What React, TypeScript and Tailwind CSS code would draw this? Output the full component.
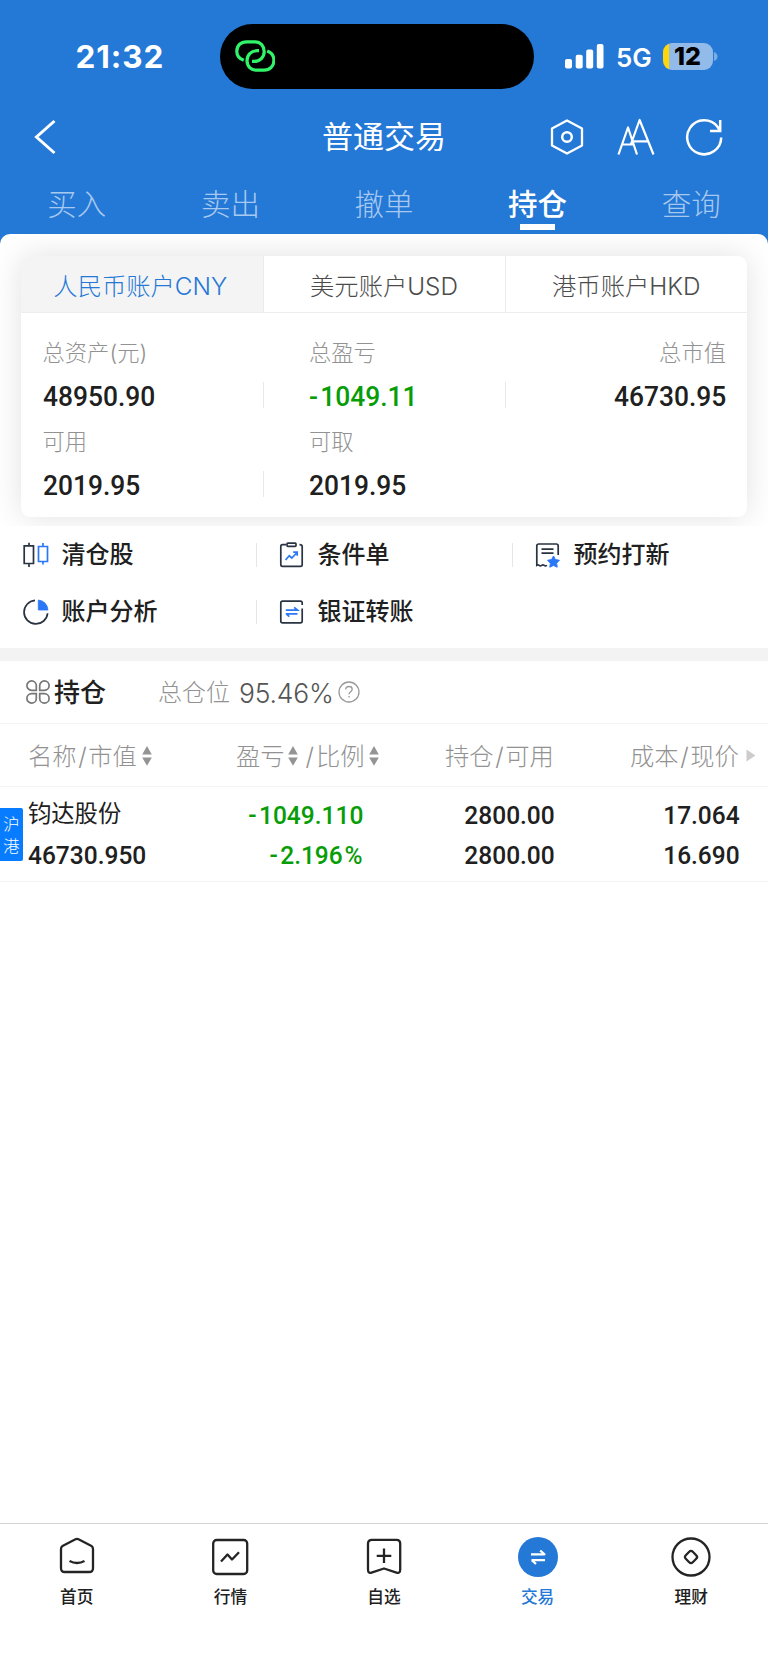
import React from 'react';

const CJK = "font-['Inter','Noto_Sans_CJK_SC',sans-serif]";

function Num({ children, className = 'origin-left' }: { children: string; className?: string }) {
  const negative = children.startsWith('-');
  const percent = children.endsWith('%');
  const body = children.replace('-', '').replace('%', '');
  return (
    <span className={`inline-block scale-x-[0.925] whitespace-nowrap font-['Roboto',sans-serif] font-medium ${className}`}>
      {negative && <span className="mr-[2.5px]">-</span>}
      {body}
      {percent && <span className="ml-[2px]">%</span>}
    </span>
  );
}

function StatusBar() {
  return (
    <div className="flex h-[113px] items-start pt-6">
      <div className="mt-[13px] w-[220px] pl-[75.5px] text-[31.5px] leading-[40px] font-bold tracking-[0.9px] text-white">
        <span className="inline-block whitespace-nowrap">21:32</span>
      </div>
      <div className="flex h-[64.5px] w-[314px] items-center rounded-full bg-black pl-[15px]">
        <svg width="40" height="32" viewBox="0 0 40 32" fill="none" stroke="#30f569" strokeWidth="3.2">
          <path d="M8.8 20.3C4.2 18.7 1.8 15.5 1.8 11.5C1.8 5.2 6 1.8 11.5 1.8H20C25.6 1.8 29.2 6.2 29.2 11.6C29.2 17.5 24.7 21.4 19 21.4H17" />
          <path d="M24 10.7H22C16 10.7 12 15 12 20.6C12 26.5 16 30.2 21.5 30.2H29C35 30.2 38.9 26 38.9 20.5C38.9 15.5 36.4 12.5 32.2 11" />
        </svg>
      </div>
      <div className="flex h-[64.5px] items-center pl-[31px]">
        <svg width="39" height="25" viewBox="0 0 39 25" fill="#fff">
          <rect x="0" y="15" width="7" height="9.5" rx="2" />
          <rect x="10.7" y="10.8" width="7" height="13.7" rx="2" />
          <rect x="21.2" y="5.6" width="7" height="18.9" rx="2" />
          <rect x="31.8" y="0" width="6.7" height="24.5" rx="2" />
        </svg>
        <span className="mt-[3px] ml-3 w-[36px] text-[26px] leading-8 font-semibold whitespace-nowrap text-white">5G</span>
        <div className="ml-[10.5px] flex h-[27px] w-[50px] items-center justify-center rounded-[9px] bg-[#92bbea] bg-linear-to-r from-[#ffd60a] from-12% to-[#92bbea] to-12%">
          <span className="text-[25px] leading-[27px] font-extrabold whitespace-nowrap text-black">12</span>
        </div>
        <svg className="ml-px" width="4" height="9" viewBox="0 0 4 9"><path d="M0 0Q3.5 1.5 3.5 4.5T0 9Z" fill="#7baee6" /></svg>
      </div>
    </div>
  );
}

function NavBar() {
  return (
    <div className="grid h-[48px] grid-cols-[1fr_auto_1fr] items-center">
      <svg className="ml-[34px]" width="23" height="36" viewBox="0 0 23 36" fill="none" stroke="#fff" strokeWidth="3">
        <path d="M20.5 2L2.5 18L20.5 34" />
      </svg>
      <h1 className="text-[31px] leading-10 font-normal text-white">普通交易</h1>
      <div className="flex items-center justify-end pr-[45px]">
        <svg width="34" height="38" viewBox="0 0 34 38" fill="none" stroke="#fff" strokeWidth="2.3" strokeLinejoin="round">
          <path d="M17 2.5L32 10.5V27.5L17 35.5L2 27.5V10.5Z" />
          <circle cx="17" cy="19" r="4.8" strokeWidth="2.5" />
        </svg>
        <svg className="ml-[33px]" width="38" height="38" viewBox="0 0 38 38" fill="none" stroke="#fff" strokeWidth="2.2" strokeLinejoin="round">
          <path d="M1.5 36.5L11 9.5L20 36.5M4.8 26.5H16.5M14 26L22.6 2L36.5 36.5M16.5 23.3H31" />
        </svg>
        <svg className="ml-[30px]" width="38" height="38" viewBox="0 0 38 38" fill="none" stroke="#fff" strokeWidth="2.5">
          <path d="M36.2 19.5A17 17 0 1 1 32.5 8.7L35 12.5M35.2 2V13H25" />
        </svg>
      </div>
    </div>
  );
}

const tabs = ['买入', '卖出', '撤单', '持仓', '查询'];

function TradeTabs() {
  return (
    <nav className="grid grow grid-cols-5 pt-[23px] text-[29.5px] leading-10">
      {tabs.map((t) => {
        const on = t === '持仓';
        return (
          <div key={t} className="flex flex-col items-center">
            <span className={on ? 'font-medium text-white' : 'font-light text-[#a8c9ef]'}>{t}</span>
            <span className={on ? 'h-[6px] w-[35px] bg-white' : 'h-[6px] w-[35px]'} />
          </div>
        );
      })}
    </nav>
  );
}

function Stat({ label, value, green, right, divider }: { label: string; value: string; green?: boolean; right?: boolean; divider?: boolean }) {
  return (
    <div className={`relative flex h-[89px] flex-col ${right ? 'items-end' : 'items-start'}`}>
      <span className="text-[22.3px] leading-[37px] font-light text-[#929292]">{label}</span>
      <span className={green ? 'text-[28.5px] leading-[49px] text-[#079d07]' : 'text-[28.5px] leading-[49px] text-[#202020]'}>
        <Num className={right ? 'origin-right' : 'origin-left'}>{value}</Num>
      </span>
      {divider && <span className="absolute top-[48px] right-0 h-[26px] w-px bg-[#e8e8e8]" />}
    </div>
  );
}

function AccountCard() {
  return (
    <section className="h-[292px] shrink-0 overflow-hidden rounded-t-[10px] bg-white px-[21px] pt-[22px]">
      <div className="h-[261px] overflow-clip rounded-[9px] bg-white shadow-[0_0_32px_rgba(0,0,0,0.12)]">
        <div className="grid h-[57px] grid-cols-[242.5px_242px_1fr] border-b border-[#ededed] text-center text-[24.3px] leading-[60px] font-light text-[#4c4c4c]">
          <div className="h-[56px] border-r border-[#ececec] bg-[#f4f4f4] pr-[3px] text-[#2478d6]">人民币账户CNY</div>
          <div className="h-[56px] border-r border-[#ececec]">美元账户USD</div>
          <div className="h-[56px]">港币账户HKD</div>
        </div>
        <div className="grid grid-cols-[221.5px_45px_197px_1fr] pt-[21px] pr-[21px] pl-[21.5px]">
          <Stat label="总资产(元)" value="48950.90" divider />
          <span />
          <Stat label="总盈亏" value="-1049.11" green divider />
          <Stat label="总市值" value="46730.95" right />
          <Stat label="可用" value="2019.95" divider />
          <span />
          <Stat label="可取" value="2019.95" />
        </div>
      </div>
    </section>
  );
}

const DARK = '#293342';
const BLUE = '#2a78f8';

const CandleIcon = () => (
  <svg width="26" height="26" viewBox="0 0 26 26" fill="none" strokeWidth="1.7">
    <path d="M1.2 3.8H10.5V21.5H1.2ZM6 .8V3.8M6 21.5V25" stroke={DARK} />
    <path d="M15.5 4.5H24.5V19.5H15.5ZM20 1V4.5M20 19.5V22.5" stroke={BLUE} />
  </svg>
);
const ClipIcon = () => (
  <svg width="26" height="26" viewBox="0 0 26 26" fill="none" strokeWidth="1.7" stroke={DARK}>
    <path d="M7 2.7H3.5Q1.8 2.7 1.8 4.5V22.5Q1.8 24.3 3.5 24.3H21.5Q23.2 24.3 23.2 22.5V4.5Q23.2 2.7 20.5 2.7" />
    <rect x="8" y="1.2" width="9" height="3.2" rx=".8" />
    <path d="M6.5 18L10.3 13.8L12.8 16L18 10.5M14.2 10.2H18.2V13.7" stroke={BLUE} />
  </svg>
);
const ListIcon = () => (
  <svg width="26" height="26" viewBox="0 0 26 26" fill="none" strokeWidth="1.7" stroke={DARK}>
    <path d="M23.2 13V4Q23.2 2 21.2 2H3.8Q1.8 2 1.8 4V23.2Q3 22.4 4.2 23.4T6.7 23.4T9.2 23.4T12 23.4M6.5 7.2H18.5M6.5 11.2H18.5" />
    <path d="M18.5 14L20.4 17.6L24.4 18.3L21.6 21.2L22.2 25.2L18.5 23.4L14.8 25.2L15.4 21.2L12.6 18.3L16.6 17.6Z" fill={BLUE} stroke={BLUE} strokeWidth="1" />
  </svg>
);
const PieIcon = () => (
  <svg width="26" height="26" viewBox="0 0 26 26" fill="none" strokeWidth="1.7" stroke={DARK}>
    <path d="M12 1.4A11.8 11.8 0 1 0 24.6 14.2" />
    <path d="M15.3 11V1Q24 2.2 25 11Z" fill={BLUE} stroke={BLUE} strokeWidth=".8" />
  </svg>
);
const TransferIcon = () => (
  <svg width="26" height="26" viewBox="0 0 26 26" fill="none" strokeWidth="1.7" stroke={DARK}>
    <path d="M23.2 6V4Q23.2 2.2 21.4 2.2H3.6Q1.8 2.2 1.8 4V22Q1.8 23.8 3.6 23.8H21.4Q23.2 23.8 23.2 22V9.5" />
    <path d="M6.8 11.2H18.5L15.2 8.4M18.5 14.8H6.8M7.3 14.8L10.3 17.6" stroke={BLUE} strokeWidth="1.8" />
  </svg>
);

const shortcuts = [
  { icon: <CandleIcon />, text: '清仓股', divider: true },
  { icon: <ClipIcon />, text: '条件单', divider: true },
  { icon: <ListIcon />, text: '预约打新', divider: false },
  { icon: <PieIcon />, text: '账户分析', divider: true },
  { icon: <TransferIcon />, text: '银证转账', divider: false },
];

function Shortcuts() {
  return (
    <section className="grid h-[122px] shrink-0 grid-cols-3 grid-rows-[57px_58px]">
      {shortcuts.map((s) => (
        <div key={s.text} className="flex items-center pl-[23px]">
          {s.icon}
          <span className="ml-[12.5px] grow text-[24px] leading-8 font-medium text-[#202020]">{s.text}</span>
          {s.divider && <span className="-mr-px h-6 w-px bg-[#e6e6e6]" />}
        </div>
      ))}
    </section>
  );
}

const Sort = ({ className = '' }: { className?: string }) => (
  <svg className={className} width="10" height="20" viewBox="0 0 10 20" fill="#949494">
    <path d="M5 0L9.8 8.4H.2ZM5 19.8L.2 11.4H9.8Z" />
  </svg>
);

const Slash = () => <span className="mx-[1.6px]">/</span>;

function Holdings() {
  return (
    <section className="shrink-0">
      <div className="flex h-[63px] items-center border-b border-[#f3f3f3] pl-[26px]">
        <svg width="24" height="24" viewBox="0 0 24 24" fill="none" stroke="#777" strokeWidth="1.7">
          <path d="M10.3 10.3H5.6A4.7 4.7 0 1 1 10.3 5.6ZM13.7 10.3V5.6A4.7 4.7 0 1 1 18.4 10.3ZM10.3 13.7V18.4A4.7 4.7 0 1 1 5.6 13.7ZM13.7 13.7H18.4A4.7 4.7 0 1 1 13.7 18.4Z" />
        </svg>
        <h2 className="mt-[2px] ml-[4px] w-[104px] text-[26px] leading-9 font-medium text-[#202020]">持仓</h2>
        <span className="mt-[2px] text-[24px] leading-9 font-light text-[#929292]">总仓位</span>
        <span className="mt-[2px] ml-[9px] w-[99px] text-[26.5px] leading-9 font-light tracking-[-0.2px] whitespace-nowrap text-[#555]">95.46%</span>
        <svg width="22" height="22" viewBox="0 0 22 22" fill="none" stroke="#999" strokeWidth="1.3">
          <circle cx="11" cy="11" r="10" />
          <path d="M7.8 8.5Q7.8 5.5 11 5.5T14.2 8.3C14.2 10.5 11 10.8 11 13.2M11 15V16.5" />
        </svg>
      </div>
      <div className="flex h-[63px] items-center border-b border-[#f3f3f3] pt-px pl-[28px] text-[24.3px] leading-9 font-light whitespace-nowrap text-[#929292]">
        <div className="flex w-[208px] items-center">名称<Slash />市值<Sort className="ml-[5px]" /></div>
        <div className="flex w-[209px] items-center">盈亏<Sort className="mr-[8px] ml-[3px]" />/<span className="ml-[2px]">比例</span><Sort className="ml-[4px]" /></div>
        <div className="w-[185px]">持仓<Slash />可用</div>
        <div>成本<Slash />现价</div>
        <svg className="ml-[7px]" width="10" height="13" viewBox="0 0 10 13"><path d="M.5 .5L9.5 6.5L.5 12.5Z" fill="#ccc" /></svg>
      </div>
      <div className="relative grid h-[95px] grid-cols-[178px_157px_192px_185px] grid-rows-[40px_40px] border-b border-[#f3f3f3] pt-[7px] pl-[28px] text-[26.5px] leading-[40px] text-[#202020]">
        <span className="absolute top-[21px] left-0 flex h-[53px] w-[23px] flex-col items-center rounded-r-[2px] bg-[#087cff] pt-[6px] text-[16.3px] leading-[21.5px] font-light text-white">
          <span>沪</span><span>港</span>
        </span>
        <div className="text-[23.3px] font-normal">钧达股份</div>
        <div className="text-right text-[#079d07]"><Num className="origin-right">-1049.110</Num></div>
        <div className="text-right"><Num className="origin-right">2800.00</Num></div>
        <div className="text-right"><Num className="origin-right">17.064</Num></div>
        <div><Num>46730.950</Num></div>
        <div className="text-right text-[#079d07]"><Num className="origin-right">-2.196%</Num></div>
        <div className="text-right"><Num className="origin-right">2800.00</Num></div>
        <div className="text-right"><Num className="origin-right">16.690</Num></div>
      </div>
    </section>
  );
}

const bottomItems = [
  { text: '首页', icon: <path d="M18.5 2.3Q20 1.3 21.5 2.3L34.5 9Q36 10 36 12V31.2Q36 35 32 35H8Q4 35 4 31.2V12Q4 10 5.5 9ZM12.5 24Q20 28 27.5 24" /> },
  { text: '行情', icon: <><rect x="3.2" y="3" width="34" height="34" rx="3.5" /><path d="M11 24.5L17.5 17.5L22 22.5L29 15.2" /></> },
  { text: '自选', icon: <><path d="M8 2.8H32.5Q36.2 2.8 36.2 6.5V32.5Q36.2 36.8 32.5 35.6L20 31.5L7.5 35.6Q4 36.8 4 32.5V6.5Q4 2.8 8 2.8Z" /><path d="M20 11.5V26M12.7 18.8H27.3" /></> },
  { text: '交易', icon: <><circle cx="20" cy="20" r="20" fill="#2478d6" stroke="none" /><path d="M13 17.3H26.5L22.2 13.5M27 23.2H13.5M13.8 23.2L18 27" stroke="#fff" /></> },
  { text: '理财', icon: <><circle cx="20" cy="20" r="18.5" /><path d="M18.2 14.8Q20 13 21.8 14.8L25.2 18.2Q27 20 25.2 21.8L21.8 25.2Q20 27 18.2 25.2L14.8 21.8Q13 20 14.8 18.2Z" /></> },
];

function BottomBar() {
  return (
    <footer className="grid h-[146px] shrink-0 grid-cols-5 border-t border-[#d4d4d4] pt-[13px]">
      {bottomItems.map((b) => (
        <div key={b.text} className={`flex flex-col items-center text-[16.7px] leading-6 font-medium ${b.text === '交易' ? 'text-[#2478d6]' : 'text-[#202020]'}`}>
          <svg width="40" height="40" viewBox="0 0 40 40" fill="none" stroke="#242424" strokeWidth="2.3" strokeLinejoin="round">{b.icon}</svg>
          <span className="mt-[8px]">{b.text}</span>
        </div>
      ))}
    </footer>
  );
}

export default function App() {
  return (
    <div className={`flex h-[1669px] w-[768px] flex-col overflow-hidden bg-white ${CJK}`}>
      <div className="flex h-[526px] shrink-0 flex-col bg-[#2478d6]">
        <header className="flex h-[234px] shrink-0 flex-col">
          <StatusBar />
          <NavBar />
          <TradeTabs />
        </header>
        <AccountCard />
      </div>
      <Shortcuts />
      <div className="h-[13px] shrink-0 bg-[#f3f3f3]" />
      <Holdings />
      <main className="grow" />
      <BottomBar />
    </div>
  );
}
